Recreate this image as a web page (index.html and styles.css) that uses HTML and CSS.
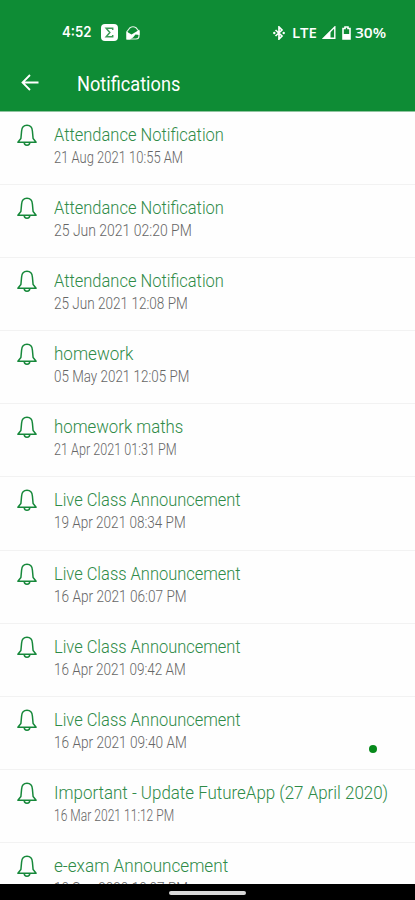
FILE: index.html
```html
<!DOCTYPE html>
<html lang="en">
<head>
    <meta charset="UTF-8">
    <meta name="viewport" content="width=device-width, initial-scale=1.0">
    <title>Notifications</title>
    <link rel="stylesheet" href="styles.css">
</head>
<body>
    <header class="header">
        <div class="status-bar">
            <div class="status-left">
                <span class="clock"><span class="fit" data-width="29">4:52</span></span>
                <svg class="app-icon" width="17" height="17" viewBox="0 0 17 17">
                    <rect width="17" height="17" rx="4" fill="#fff"/>
                    <path d="M11.7 6V4.3H5.2l3.6 4.2-3.6 4.2h6.5V11" fill="none" stroke="#3c9b57" stroke-width="1.5"/>
                </svg>
                <svg class="mail-icon" width="14" height="14" viewBox="0 0 14 14">
                    <path d="M1 5.5 4 1.7Q7-.2 10 1.7L13 5.5V10Q13 13 10 13H1Z" fill="none" stroke="#e4f2e7" stroke-width="1.2"/>
                    <path d="M.5 5.5 5.5 8.5 13.5 3.8V9L9.5 8.5 7 11.5 4 13.5H.5Z" fill="#fff"/>
                </svg>
            </div>
            <div class="status-right">
                <svg class="bluetooth" width="12" height="14" viewBox="0 0 12 14">
                    <path d="M2.5 4 9 10 6 13V1L9 4 2.5 10" fill="none" stroke="#fff" stroke-width="1.7"/>
                    <circle cx="1.3" cy="7" r="1.2" fill="#fff"/>
                    <circle cx="10.7" cy="7" r="1.2" fill="#fff"/>
                </svg>
                <span class="network"><span class="fit" data-width="25">LTE</span></span>
                <svg class="signal" width="14" height="13" viewBox="0 0 14 13">
                    <path d="M1.5 12.3H12.8V1Z" fill="none" stroke="#fff" stroke-width="1.4"/>
                    <path d="M1 12.5 8.5 5V12.5Z" fill="#fff"/>
                </svg>
                <svg class="battery" width="9" height="14" viewBox="0 0 9 14">
                    <path d="M1 2.5H3V1H6V2.5H8V13H1Z" fill="none" stroke="#fff" stroke-width="1.6"/>
                    <path d="M1 8H8V13H1Z" fill="#fff"/>
                </svg>
                <span class="percent"><span class="fit" data-width="31">30%</span></span>
            </div>
        </div>
        <div class="toolbar">
            <svg class="back" width="18" height="17" viewBox="0 0 18 17">
                <path d="M17.5 8.5H1.5M9 1 1.5 8.5 9 16" fill="none" stroke="#fff" stroke-width="1.8"/>
            </svg>
            <h1><span class="fit" data-width="103">Notifications</span></h1>
        </div>
    </header>
    <main class="list" id="list"></main>
    <div class="dot"></div>
    <footer class="nav-bar"><div class="home-pill"></div></footer>
    <script src="script.js"></script>
</body>
</html>
```
FILE: styles.css
```css
* { box-sizing: border-box; }
body {
    margin: 0;
    height: 900px;
    display: flex;
    flex-direction: column;
    overflow: hidden;
    position: relative;
    background: #fefefe;
    font-family: Roboto, 'Liberation Sans', sans-serif;
}
.header {
    height: 112px;
    flex: none;
    background: #0e8c35;
    border-bottom: 1px solid #8fc49f;
    color: #fff;
}
.status-bar {
    height: 64px;
    display: flex;
    justify-content: space-between;
    padding: 1px 29px 0 62px;
    font-family: 'Open Sans', sans-serif;
    font-size: 15px;
    font-weight: 600;
}
.status-left, .status-right {
    display: flex;
    align-items: center;
}
.clock, .network, .percent { margin-bottom: 2px; }
.clock {
    font-family: Inter, sans-serif;
    font-size: 14.5px;
    font-weight: 600;
}
.app-icon { margin-left: 10px; }
.mail-icon { margin-left: 8px; }
.network { margin-left: 7px; }
.signal { margin-left: 5px; }
.battery { margin: 0 4px 0 6px; }
.fit {
    display: inline-block;
    white-space: nowrap;
    transform-origin: left center;
}
.toolbar {
    height: 38px;
    display: flex;
    align-items: center;
    padding-left: 21px;
}
.back { margin-bottom: 2px; }
.toolbar h1 {
    margin: 2px 0 0 38px;
    font-size: 21px;
    font-weight: 400;
    line-height: 28px;
}
.list {
    flex: 1;
    min-height: 0;
    overflow: hidden;
}
.item {
    height: 73.1px;
    display: flex;
    align-items: flex-start;
    padding: 11px 0 0 17px;
    border-bottom: 1px solid #f2f2f2;
}
.bell {
    flex: none;
    margin-right: 17px;
}
.title {
    padding-bottom: 1px;
    color: #2f8b48;
    font-size: 19px;
    font-weight: 300;
    line-height: 23px;
}
.date {
    color: #666;
    font-size: 16.5px;
    font-weight: 300;
    line-height: 22px;
}
.dot {
    position: absolute;
    left: 369px;
    top: 745px;
    width: 8px;
    height: 8px;
    border-radius: 50%;
    background: #078a1b;
}
.nav-bar {
    height: 16px;
    flex: none;
    display: flex;
    justify-content: center;
    align-items: center;
    background: #000;
}
.home-pill {
    width: 77px;
    height: 4px;
    margin-top: 2px;
    border-radius: 2px;
    background: #d8d8d8;
}
```
FILE: script.js
```javascript
// title, date and their text widths in px
const notifications = [
    ['Attendance Notification', 170, '21 Aug 2021 10:55 AM', 129],
    ['Attendance Notification', 170, '25 Jun 2021 02:20 PM', 138],
    ['Attendance Notification', 170, '25 Jun 2021 12:08 PM', 134],
    ['homework', 79, '05 May 2021 12:05 PM', 135],
    ['homework maths', 129, '21 Apr 2021 01:31 PM', 123],
    ['Live Class Announcement', 187, '19 Apr 2021 08:34 PM', 132],
    ['Live Class Announcement', 187, '16 Apr 2021 06:07 PM', 133],
    ['Live Class Announcement', 187, '16 Apr 2021 09:42 AM', 132],
    ['Live Class Announcement', 187, '16 Apr 2021 09:40 AM', 133],
    ['Important - Update FutureApp (27 April 2020)', 334, '16 Mar 2021 11:12 PM', 120],
    ['e-exam Announcement', 174, '10 Sep 2020 10:07 PM', 134]
];
const bell = `<svg class="bell" width="20" height="24" viewBox="0 0 20 24">
    <path d="M.9 19.2H19.1L16.1 15.5 15.4 8C15.2 4.5 13.2 2.2 10 2.2S4.8 4.5 4.6 8L3.9 15.5Z" fill="none" stroke="#16883a" stroke-width="1.5" stroke-linejoin="round"/>
    <path d="M7.2 19.3A2.8 3 0 0 0 12.8 19.3" fill="none" stroke="#16883a" stroke-width="1.5"/>
</svg>`;
document.getElementById('list').innerHTML = notifications.map(([title, titleWidth, date, dateWidth]) => `
    <div class="item">
        ${bell}
        <div>
            <div class="title"><span class="fit" data-width="${titleWidth}">${title}</span></div>
            <div class="date"><span class="fit" data-width="${dateWidth}">${date}</span></div>
        </div>
    </div>`).join('');
// condense each label to its width
document.querySelectorAll('.fit').forEach(el => {
    const natural = el.offsetWidth;
    el.style.transform = `scaleX(${el.dataset.width / natural})`;
    el.style.marginRight = `${el.dataset.width - natural}px`;
});
```
